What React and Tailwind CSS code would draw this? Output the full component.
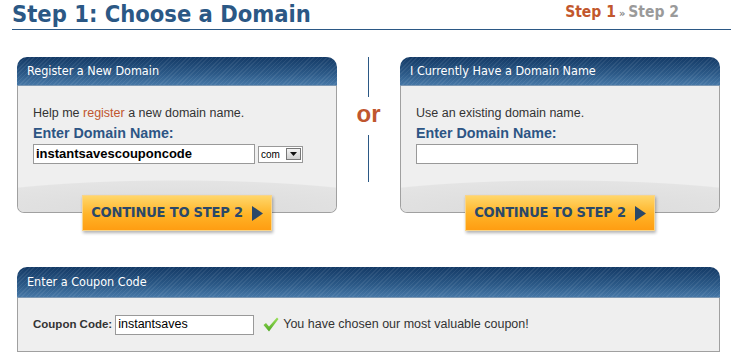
const headerBg =
  "bg-[repeating-linear-gradient(135deg,rgba(255,255,255,0.07)_0px,rgba(255,255,255,0.07)_1px,transparent_1px,transparent_3px),linear-gradient(to_bottom,#143a66,#2c5a88_60%,#4677a6)]";

function PanelHeader({ title, h = "h-[29px]" }) {
  return (
    <div
      className={`${h} ${headerBg} rounded-t-[10px] flex items-center pl-[10px] text-white text-[12.5px] border-b border-[#7d98b3]`}
      style={{ fontFamily: '"DejaVu Sans Condensed", "DejaVu Sans", sans-serif' }}
    >
      {title}
    </div>
  );
}

function ContinueButton() {
  return (
    <div className="flex justify-center -mt-[18px] relative">
      <button
        className="w-[190px] h-[36px] flex items-center justify-center gap-[9px] bg-[linear-gradient(to_bottom,#ffd66a,#ffb326_55%,#ff9d12)] border border-[#f8d48a] shadow-[1px_2px_3px_rgba(0,0,0,0.3)] text-[#2a4869] font-bold text-[14.5px]"
        style={{ fontFamily: '"DejaVu Sans Condensed", "DejaVu Sans", sans-serif' }}
      >
        <span className="tracking-[-0.2px]">CONTINUE TO STEP 2</span>
        <svg width="11" height="15" viewBox="0 0 11 15">
          <path d="M0 0 L11 7.5 L0 15 Z" fill="#2a4869" />
        </svg>
      </button>
    </div>
  );
}

function PanelBody({ children }) {
  return (
    <div className="h-[127px] bg-[#efefef] border border-t-0 border-[#a0a0a0] rounded-b-[7px] flex flex-col overflow-hidden">
      <div className="flex-1 pl-[15px] pt-[19px]">{children}</div>
      <div className="h-[32px] bg-[radial-gradient(ellipse_80%_100%_at_50%_100%,#dadada_0%,#e4e4e4_97%,transparent_100%)]" />
    </div>
  );
}

export default function App() {
  return (
    <div
      className="w-[740px] h-[363px] bg-white overflow-hidden text-[#333]"
      style={{ fontFamily: '"Liberation Sans", Arial, sans-serif' }}
    >
      {/* title row */}
      <div className="ml-[12px] w-[719px] h-[30px] flex items-start justify-between border-b border-[#2b5885]">
        <h1
          className="text-[23.5px] leading-[28px] font-bold text-[#2b5885]"
          style={{ fontFamily: '"DejaVu Sans Condensed", "DejaVu Sans", sans-serif' }}
        >
          Step 1: Choose a Domain
        </h1>
        <div
          className="mr-[52px] mt-[3px] text-[15.5px] font-bold leading-[18px]"
          style={{ fontFamily: '"DejaVu Sans Condensed", "DejaVu Sans", sans-serif' }}
        >
          <span className="text-[#c2572d]">Step 1</span>
          <span className="text-[#888] text-[11px] mx-[3px]">»</span>
          <span className="text-[#9a9a9a]">Step 2</span>
        </div>
      </div>

      {/* domain panels */}
      <div className="flex ml-[17px] mt-[27px]">
        <div className="w-[320px]">
          <PanelHeader title="Register a New Domain" />
          <PanelBody>
            <p className="text-[12.5px] leading-[16px]">
              Help me <span className="text-[#c0562e]">register</span> a new domain name.
            </p>
            <p className="text-[14.3px] leading-[17px] font-bold text-[#2d5584] mt-[4px]">Enter Domain Name:</p>
            <div className="flex items-center mt-[2px]">
              <div className="w-[222px] h-[20px] border border-[#999] bg-white flex items-center pl-[2px] text-[13px] font-bold text-black">
                instantsavescouponcode
              </div>
              <div className="ml-[3px] w-[45px] h-[17px] border border-[#999] bg-white flex items-center justify-between pl-[2px] pr-[1px]">
                <span className="text-[10px] text-black">com</span>
                <span className="w-[15px] h-[12px] bg-[linear-gradient(to_bottom,#f4f4f4,#cfcfcf)] border border-[#777] flex items-center justify-center">
                  <svg width="7" height="4" viewBox="0 0 7 4">
                    <path d="M0 0 L7 0 L3.5 4 Z" fill="#111" />
                  </svg>
                </span>
              </div>
            </div>
          </PanelBody>
          <ContinueButton />
        </div>

        <div className="w-[63px] flex flex-col items-center">
          <div className="w-px h-[40px] bg-[#2b5885]" />
          <div className="text-[24px] leading-[24px] font-bold text-[#c0562e] mt-[5px] mb-[9px]">or</div>
          <div className="w-px h-[47px] bg-[#2b5885]" />
        </div>

        <div className="w-[320px]">
          <PanelHeader title="I Currently Have a Domain Name" />
          <PanelBody>
            <p className="text-[12.5px] leading-[16px]">Use an existing domain name.</p>
            <p className="text-[14.3px] leading-[17px] font-bold text-[#2d5584] mt-[4px]">Enter Domain Name:</p>
            <div className="mt-[2px] w-[222px] h-[20px] border border-[#999] bg-white" />
          </PanelBody>
          <ContinueButton />
        </div>
      </div>

      {/* coupon panel */}
      <div className="ml-[17px] w-[703px] mt-[36px]">
        <PanelHeader title="Enter a Coupon Code" h="h-[31px]" />
        <div className="h-[54px] bg-[#efefef] border border-t-0 border-[#a0a0a0] flex items-center pl-[15px] text-[12.5px]">
          <span className="font-bold text-[11.5px]">Coupon Code:</span>
          <div className="ml-[3px] w-[139px] h-[20px] border border-[#999] bg-white flex items-center pl-[2px] text-black">
            instantsaves
          </div>
          <svg className="ml-[9px]" width="16" height="15" viewBox="0 0 16 15">
            <defs>
              <linearGradient id="chk" x1="0" y1="0" x2="0" y2="1">
                <stop offset="0" stopColor="#9be05a" />
                <stop offset="1" stopColor="#4fa823" />
              </linearGradient>
            </defs>
            <path d="M0.5 8 L3 6 L6 9.5 L14 0.5 L15.5 2 L6 14.5 Z" fill="url(#chk)" />
          </svg>
          <span className="ml-[4px]">You have chosen our most valuable coupon!</span>
        </div>
      </div>
    </div>
  );
}
